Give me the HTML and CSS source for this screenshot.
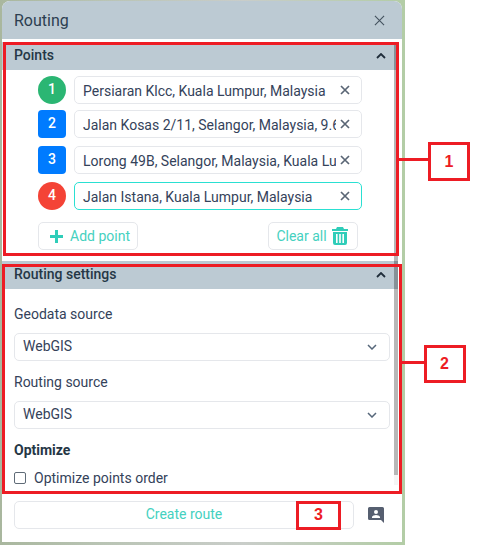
FILE: index.html
```html
<!DOCTYPE html>
<html lang="en">
<head>
  <meta charset="UTF-8" />
  <title>Routing</title>
  <link rel="stylesheet" href="styles.css">
</head>
<body>

  <div class="map">
    <div class="panel">

      <div class="panel-title">
        <span>Routing</span>
        <svg class="close-icon" viewBox="0 0 12 12"><path d="M1 1l10 10M11 1L1 11"/></svg>
      </div>

      <div class="panel-body">

        <!-- Points -->
        <div class="section-head">
          <span>Points</span>
          <svg class="chevron" viewBox="0 0 10 6"><path d="M1 5l4-4 4 4"/></svg>
        </div>
        <div class="points">
          <div class="point first">
            <div class="marker round green">1</div>
            <div class="point-input">
              <span class="point-text">Persiaran Klcc, Kuala Lumpur, Malaysia</span>
              <svg class="clear-icon" viewBox="0 0 10 10"><path d="M1 1l8 8M9 1L1 9"/></svg>
            </div>
          </div>
          <div class="point">
            <div class="marker blue">2</div>
            <div class="point-input">
              <span class="point-text">Jalan Kosas 2/11, Selangor, Malaysia, 9.6 km</span>
              <svg class="clear-icon" viewBox="0 0 10 10"><path d="M1 1l8 8M9 1L1 9"/></svg>
            </div>
          </div>
          <div class="point">
            <div class="marker blue">3</div>
            <div class="point-input">
              <span class="point-text">Lorong 49B, Selangor, Malaysia, Kuala Lumpur</span>
              <svg class="clear-icon" viewBox="0 0 10 10"><path d="M1 1l8 8M9 1L1 9"/></svg>
            </div>
          </div>
          <div class="point">
            <div class="marker round red">4</div>
            <div class="point-input active">
              <span class="point-text">Jalan Istana, Kuala Lumpur, Malaysia</span>
              <svg class="clear-icon" viewBox="0 0 10 10"><path d="M1 1l8 8M9 1L1 9"/></svg>
            </div>
          </div>
          <div class="point-actions">
            <div class="btn add-btn">
              <svg class="plus-icon" viewBox="0 0 13 13"><path d="M5 0h3v5h5v3H8v5H5V8H0V5h5z"/></svg>
              Add point
            </div>
            <div class="btn clear-btn">
              Clear all
              <svg class="trash-icon" viewBox="0 0 16 18"><path d="M5 0h6l1 2h4v2H0V2h4zM1 5h14v11a2 2 0 0 1-2 2H3a2 2 0 0 1-2-2zm3 2v9h1.6V7zm3.2 0v9h1.6V7zm3.2 0v9H12V7z" fill-rule="evenodd"/></svg>
            </div>
          </div>
        </div>

        <!-- Routing settings -->
        <div class="section-head">
          <span>Routing settings</span>
          <svg class="chevron" viewBox="0 0 10 6"><path d="M1 5l4-4 4 4"/></svg>
        </div>
        <div class="settings">
          <div class="field-label">Geodata source</div>
          <div class="select">
            <span>WebGIS</span>
            <svg class="select-arrow" viewBox="0 0 10 6"><path d="M1 1l4 4 4-4"/></svg>
          </div>
          <div class="field-label">Routing source</div>
          <div class="select">
            <span>WebGIS</span>
            <svg class="select-arrow" viewBox="0 0 10 6"><path d="M1 1l4 4 4-4"/></svg>
          </div>
          <div class="field-label bold">Optimize</div>
          <div class="check-row">
            <span class="checkbox"></span>
            <span>Optimize points order</span>
          </div>
        </div>

        <div class="scroll-track"><div class="scroll-thumb"></div></div>
      </div>

      <div class="panel-footer">
        <div class="btn create-btn">Create route</div>
        <svg class="feedback-icon" viewBox="0 0 16 16"><path d="M1.500 0h13A1.500 1.500 0 0 1 16 1.500V16l-3-3H1.500A1.500 1.500 0 0 1 0 11.500v-10A1.500 1.500 0 0 1 1.500 0zM8 3a2 2 0 1 0 0 4 2 2 0 0 0 0-4zM4 11h8v-1c0-1.300-2.700-2-4-2s-4 .7-4 2z" fill-rule="evenodd"/></svg>
      </div>
    </div>
  </div>

  <!-- annotations drawn on top of the screenshot -->
  <div class="mark mark-points"></div>
  <div class="mark mark-settings"></div>
  <div class="mark-line line-one"></div>
  <div class="mark-line line-two"></div>
  <div class="callout callout-one">1</div>
  <div class="callout callout-two">2</div>
  <div class="callout callout-three">3</div>

</body>
</html>
```

FILE: styles.css
```css
body {
  font-family: Roboto, sans-serif;
  font-size: 14px;
  color: #34425a;
  margin: 0;
  background-color: white;
  position: relative;
  height: 549px;
  overflow: hidden;
}

.map {
  width: 405px;
  height: 545px;
  box-sizing: border-box;
  padding: 1px 3px 3px 2px;
  background: linear-gradient(90deg, #a9b79e 0, #b9c4b4 25%, #c9cdc9 60%, #b3cda6 100%);
}

.panel {
  height: 541px;
  background-color: white;
  border-radius: 8px 8px 0 0;
  overflow: hidden;
  display: flex;
  flex-direction: column;
}

/* Title bar */
.panel-title {
  height: 38px;
  flex-shrink: 0;
  background-color: #bccad3;
  display: flex;
  justify-content: space-between;
  align-items: center;
  padding: 0 17px 0 12px;
  font-size: 16px;
  color: #2c3e50;
}

.close-icon {
  width: 11px;
  height: 11px;
  fill: none;
  stroke: #44525f;
  stroke-width: 1.2;
}

.panel-body {
  position: relative;
  height: 449px;
  margin-top: 3px;
  width: 396px;
  flex-shrink: 0;
}

.section-head {
  height: 28px;
  background-color: #bccad3;
  display: flex;
  justify-content: space-between;
  align-items: center;
  padding: 0 12px;
  font-weight: 500;
  color: #253746;
}

.section-head span {
  padding-bottom: 2px;
}

.chevron {
  width: 10px;
  height: 6px;
  fill: none;
  stroke: #1f2d3a;
  stroke-width: 1.8;
}

/* Points */
.points {
  padding: 6px 36px 11px;
}

.point {
  display: flex;
  gap: 8px;
  margin-top: 8px;
}

.point.first {
  margin-top: 0;
}

.point.first + .point {
  margin-top: 6px;
}

.marker {
  width: 28px;
  height: 28px;
  box-sizing: border-box;
  padding-bottom: 2px;
  flex-shrink: 0;
  border-radius: 4px;
  color: white;
  font-size: 14px;
  font-weight: 500;
  display: flex;
  align-items: center;
  justify-content: center;
}

.marker.round {
  border-radius: 50%;
}

.green { background-color: #2bb673; }
.blue { background-color: #007bff; }
.red { background-color: #f44336; }

.point-input {
  flex: 1;
  min-width: 0;
  box-sizing: border-box;
  height: 28px;
  border: 1px solid #e5e7eb;
  border-radius: 5px;
  display: flex;
  align-items: center;
  padding: 0 11px 0 8px;
}

.point-input.active {
  border-color: #2ae0d2;
}

.point-text {
  flex: 1;
  min-width: 0;
  overflow: hidden;
  white-space: nowrap;
  margin-right: 4px;
  padding-top: 2px;
}

.clear-icon {
  width: 10px;
  height: 10px;
  flex-shrink: 0;
  fill: none;
  stroke: #5a6675;
  stroke-width: 1.7;
}

.point-actions {
  display: flex;
  justify-content: space-between;
  margin-top: 12px;
  padding-right: 4px;
}

.btn {
  box-sizing: border-box;
  height: 28px;
  border: 1px solid #e5e7eb;
  border-radius: 5px;
  color: #45d1c0;
  display: flex;
  align-items: center;
  justify-content: center;
}

.add-btn {
  width: 100px;
  gap: 7px;
  padding-left: 4px;
}

.clear-btn {
  width: 90px;
  gap: 5px;
  padding-right: 2px;
}

.plus-icon {
  width: 13px;
  height: 13px;
  fill: #2fcdb9;
}

.trash-icon {
  width: 16px;
  height: 18px;
  fill: #2fcdb9;
}

/* Settings */
.settings {
  padding: 15px 8px 0 12px;
}

.field-label {
  height: 20px;
  line-height: 20px;
  margin: 11px 0 9px;
}

.settings .field-label:first-child {
  margin-top: 0;
}

.field-label.bold {
  font-weight: 700;
  color: #253746;
  margin-bottom: 8px;
}

.select {
  box-sizing: border-box;
  height: 28px;
  border: 1px solid #e5e7eb;
  border-radius: 5px;
  display: flex;
  justify-content: space-between;
  align-items: center;
  padding: 0 12px 0 8px;
}

.select span {
  padding-bottom: 2px;
}

.select-arrow {
  width: 10px;
  height: 6px;
  fill: none;
  stroke: #56677a;
  stroke-width: 1.5;
}

.check-row {
  display: flex;
  align-items: center;
  gap: 8px;
  height: 20px;
}

.checkbox {
  width: 10px;
  height: 10px;
  flex-shrink: 0;
  border: 1px solid #5f6b77;
  border-radius: 2px;
}

/* Scrollbar sits on top of the section heads */
.scroll-track {
  position: absolute;
  top: 0;
  right: 0;
  width: 4px;
  height: 443px;
  background-color: rgba(0, 0, 0, 0.04);
}

.scroll-thumb {
  height: 433px;
  background-color: rgba(0, 0, 0, 0.25);
}

/* Footer */
.panel-footer {
  display: flex;
  align-items: center;
  padding: 10px 18px 12px 12px;
  gap: 14px;
}

.create-btn {
  flex: 1;
  padding-bottom: 2px;
}

.feedback-icon {
  width: 16px;
  height: 16px;
  flex-shrink: 0;
  fill: #565f70;
}

/* Red annotations */
.mark {
  position: absolute;
  box-sizing: border-box;
  border: 3px solid #ed1c24;
}

.mark-points {
  left: 3px;
  top: 42px;
  width: 396px;
  height: 214px;
}

.mark-settings {
  left: 2px;
  top: 264px;
  width: 400px;
  height: 230px;
}

.mark-line {
  position: absolute;
  height: 3px;
  background-color: #ed1c24;
}

.line-one {
  left: 397px;
  top: 158px;
  width: 32px;
}

.line-two {
  left: 401px;
  top: 361px;
  width: 24px;
}

.callout {
  position: absolute;
  box-sizing: border-box;
  border: 3px solid #ed1c24;
  background-color: white;
  color: #ed1c24;
  font-family: "Liberation Sans", sans-serif;
  font-size: 16px;
  font-weight: 700;
  display: flex;
  align-items: center;
  justify-content: center;
}

.callout-one {
  left: 428px;
  top: 142px;
  width: 42px;
  height: 39px;
}

.callout-two {
  left: 424px;
  top: 345px;
  width: 42px;
  height: 38px;
  padding-right: 1px;
}

.callout-three {
  left: 296px;
  top: 501px;
  width: 45px;
  height: 29px;
  padding-bottom: 2px;
}
```
